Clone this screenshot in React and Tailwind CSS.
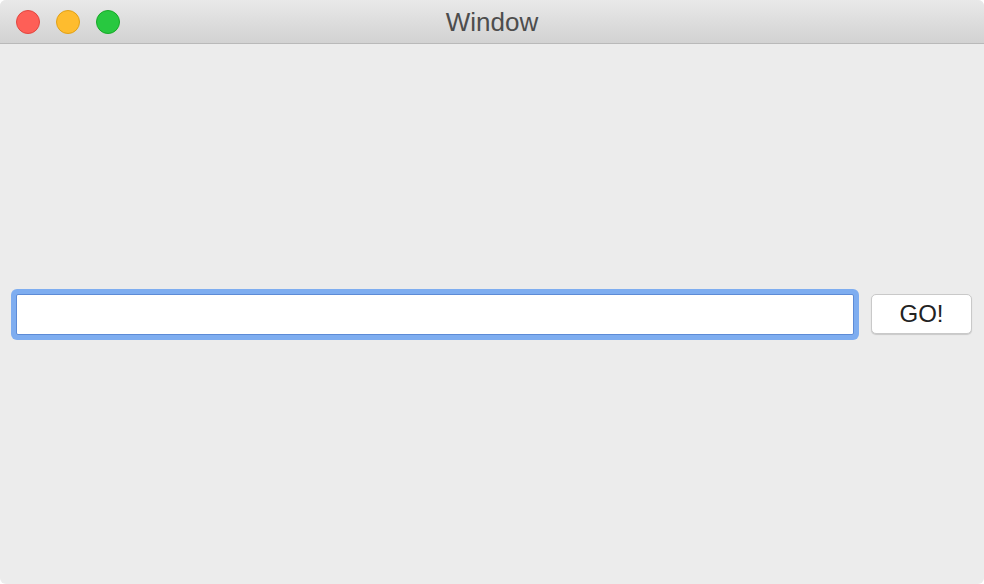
export default function App() {
  return (
    <div className="w-[984px] h-[584px] flex flex-col bg-[#ececec] rounded-[6px] overflow-hidden font-['Liberation_Sans',Arial,sans-serif]">
      {/* TITLE BAR */}
      <div className="h-[44px] shrink-0 relative flex items-center justify-center bg-gradient-to-b from-[#e9e9e9] to-[#d2d2d2] border-b border-[#b9b9b9]">
        <div className="absolute left-[16px] top-[10px] flex gap-[16px]">
          <div className="w-[24px] h-[24px] rounded-full bg-[#fe5f57] border border-[#e2463f]" />
          <div className="w-[24px] h-[24px] rounded-full bg-[#febc2e] border border-[#e1a116]" />
          <div className="w-[24px] h-[24px] rounded-full bg-[#28c840] border border-[#17a927]" />
        </div>
        <span className="text-[26px] text-[#4d4d4d] leading-none">Window</span>
      </div>

      {/* CONTENT */}
      <div className="flex-1 flex items-center pl-[16px] pr-[12px]">
        <input
          type="text"
          className="w-[838px] h-[41px] bg-white border border-[#5d8bd6] rounded-[2px] outline-none shadow-[0_0_0_5px_#7eadf0]"
        />
        <button className="ml-[17px] w-[101px] h-[40px] bg-white border border-[#c9c9c9] rounded-[5px] shadow-[0_1px_1px_rgba(0,0,0,0.15)] text-[24px] text-[#222222] leading-none">
          GO!
        </button>
      </div>
    </div>
  );
}
